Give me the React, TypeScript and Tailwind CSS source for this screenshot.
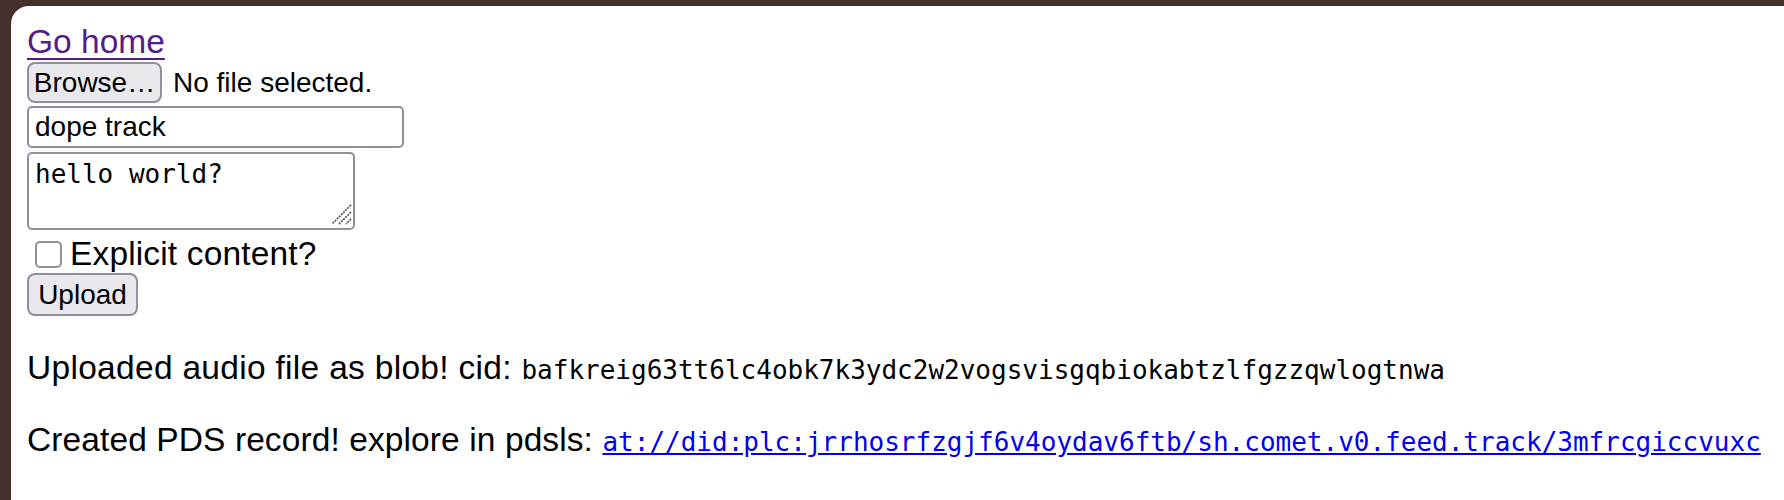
export default function App() {
  return (
    <div className="min-h-screen bg-[#45302b] pl-[11px] pt-[6px]">
      <div className="h-[494px] overflow-hidden rounded-tl-[18px] bg-white pl-4 pt-[17px] font-['Liberation_Sans',Arial,sans-serif] text-[33.5px] text-black">
        <div className="flex flex-col items-start">
          <a
            href="#"
            className="block leading-[38px] text-[#551a8b] underline decoration-2 underline-offset-[5px]"
          >
            Go home
          </a>

          <div className="mt-px flex items-center text-[28px]">
            <button className="h-[41px] w-[135px] rounded-[8px] border-2 border-[#8f8f9d] bg-[#e9e9ed] leading-none">
              Browse…
            </button>
            <span className="ml-[11px] leading-none">No file selected.</span>
          </div>

          <input
            type="text"
            defaultValue="dope track"
            className="mt-[3px] h-[42px] w-[377px] rounded-[5px] border-2 border-[#8f8f9d] bg-white px-[6px] text-[28px] outline-none"
          />

          <div className="relative mt-[4px] h-[78px] w-[328px]">
            <textarea
              defaultValue="hello world?"
              className="h-full w-full resize-none rounded-[5px] border-2 border-[#8f8f9d] bg-white px-[6px] pt-[5px] font-['DejaVu_Sans_Mono',monospace] text-[26px] leading-[30px] outline-none"
            />
            <svg
              className="pointer-events-none absolute bottom-[5px] right-[3px]"
              width="21"
              height="21"
              viewBox="0 0 21 21"
              aria-hidden
            >
              <path d="M20 1 L1 20 M20 8 L8 20 M20 15 L15 20" stroke="#5e5e68" strokeWidth="1.8" strokeDasharray="2 1" />
            </svg>
          </div>

          <div className="mt-[5px] flex h-[38px] items-center">
            <input
              type="checkbox"
              className="ml-2 h-[27px] w-[27px] appearance-none rounded-[5px] border-2 border-[#8f8f9d] bg-white"
            />
            <span className="ml-2 leading-[38px] tracking-[0.15px]">Explicit content?</span>
          </div>

          <button className="h-[43px] w-[111px] rounded-[8px] border-2 border-[#8f8f9d] bg-[#e9e9ed] text-[28px] leading-none">
            Upload
          </button>
        </div>

        <p className="mt-8 leading-[40px]">
          <span className="tracking-[0.3px]">Uploaded audio file as blob! cid: </span>
          <span className="font-['DejaVu_Sans_Mono',monospace] text-[26px] leading-[30px]">
            bafkreig63tt6lc4obk7k3ydc2w2vogsvisgqbiokabtzlfgzzqwlogtnwa
          </span>
        </p>

        <p className="mt-8 leading-[40px]">
          <span className="tracking-[0.1px]">Created PDS record! explore in pdsls: </span>
          <a
            href="#"
            className="font-['DejaVu_Sans_Mono',monospace] text-[26px] leading-[30px] text-[#0000ee] underline"
          >
            at://did:plc:jrrhosrfzgjf6v4oydav6ftb/sh.comet.v0.feed.track/3mfrcgiccvuxc
          </a>
        </p>
      </div>
    </div>
  );
}
